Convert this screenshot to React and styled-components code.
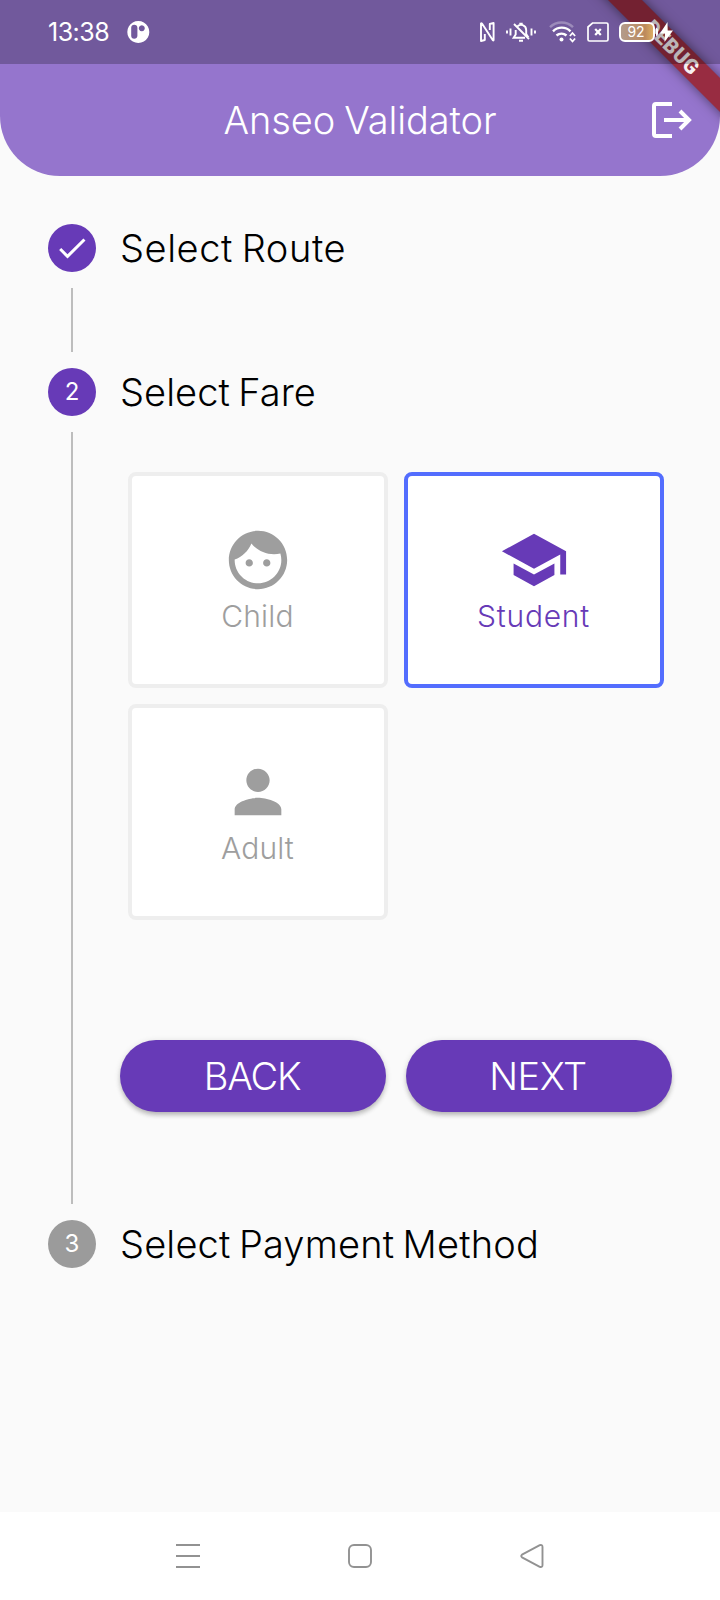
import React from "react";
import styled, { createGlobalStyle } from "styled-components";

const purple = "#673ab7";
const grey = "#9e9e9e";

const GlobalStyle = createGlobalStyle`
  *, *::before, *::after { box-sizing: border-box; }
  body { margin: 0; background: #fafafa; }
  button { font: inherit; border: 0; padding: 0; background: none; cursor: pointer; }
`;

const Screen = styled.div`
  position: relative;
  display: flex;
  flex-direction: column;
  width: 720px;
  height: 1600px;
  overflow: hidden;
  background: #fafafa;
  color: #000;
  font-family: Inter, "Liberation Sans", sans-serif;
  font-weight: 300;
`;

const Header = styled.header`
  display: flex;
  flex-direction: column;
  flex: none;
  height: 176px;
  border-radius: 0 0 60px 60px;
  background: #9575cd;
  color: #fff;
`;

const StatusBar = styled.div`
  position: relative;
  z-index: 3;
  display: flex;
  align-items: center;
  height: 64px;
  padding: 0 47px;
  background: rgba(0, 0, 0, 0.24);
`;

const Clock = styled.span`
  width: 79px;
  font-size: 25px;
  font-weight: 400;
  line-height: 30px;
  letter-spacing: -0.5px;
  padding-left: 1px;
`;

const StatusIcons = styled.div`
  display: flex;
  align-items: center;
  margin-left: auto;
`;

const StatusIcon = styled.svg`
  display: block;
  flex: none;
  overflow: visible;
  margin-right: ${(p) => p.$gap || 0}px;
`;

const Battery = styled.span`
  display: flex;
  align-items: center;
  justify-content: center;
  width: 36px;
  height: 20px;
  padding-right: 2px;
  border: 2px solid #fff;
  border-radius: 6px;
  background: linear-gradient(90deg, #b29b8c, #bd8a5c 75%, #dcae62);
  font-size: 14px;
  font-weight: 400;
  line-height: 16px;
`;

const BatteryTip = styled.span`
  width: 2px;
  height: 8px;
  margin: 0 2px 0 1px;
  border-radius: 0 2px 2px 0;
  background: #fff;
`;

const AppBar = styled.div`
  display: grid;
  grid-template-columns: 1fr auto 1fr;
  align-items: center;
  flex: 1;
  padding: 0 28px;
`;

const Title = styled.h1`
  grid-column: 2;
  margin: 0;
  font-size: 38px;
  font-weight: 300;
  line-height: 48px;
  letter-spacing: -0.1px;
  word-spacing: -1.5px;
`;

const LogoutButton = styled.button`
  justify-self: end;
  display: block;
  width: 40px;
  height: 36px;
`;

const RibbonCorner = styled.div`
  position: absolute;
  z-index: 2;
  top: 0;
  right: 0;
  width: 150px;
  height: 150px;
  overflow: hidden;
`;

const Ribbon = styled.div`
  position: absolute;
  top: 36px;
  left: 3px;
  width: 200px;
  height: 24px;
  padding-right: 2px;
  transform: rotate(45deg);
  background: #982c41;
  box-shadow: 0 0 12px rgba(0, 0, 0, 0.5);
  color: #f6f0f2;
  font-family: Roboto, sans-serif;
  font-size: 20.4px;
  font-weight: 900;
  line-height: 24px;
  letter-spacing: 0.4px;
  text-align: center;
`;

const Stepper = styled.main`
  display: flex;
  flex-direction: column;
  flex: 1;
  padding: 48px 48px 0;
`;

const StepHead = styled.div`
  display: flex;
  align-items: center;
  gap: 24px;
  height: 48px;
`;

const Badge = styled.span`
  display: flex;
  align-items: center;
  justify-content: center;
  flex: none;
  width: 48px;
  height: 48px;
  border-radius: 50%;
  background: ${(p) => (p.$inactive ? "#9b9b9b" : purple)};
  color: #fff;
  font-size: 24px;
  font-weight: 400;
  line-height: 28px;
`;

const StepTitle = styled.h2`
  margin: 0;
  font-size: 38px;
  font-weight: 300;
  line-height: 48px;
  letter-spacing: ${(p) => p.$track || 0}px;
  word-spacing: -2.5px;
`;

const StepBody = styled.div`
  display: flex;
  flex-direction: column;
  height: ${(p) => p.$height}px;
  margin: 16px 0 16px 23px;
  padding: 40px 0 0 47px;
  border-left: 2px solid #bdbdbd;
`;

const FareGrid = styled.div`
  display: grid;
  grid-template-columns: 260px 260px;
  grid-auto-rows: 216px;
  gap: 16px;
  padding-left: 8px;
`;

const FareCard = styled.button`
  && {
    display: flex;
    flex-direction: column;
    align-items: center;
    padding-top: 49px;
    border: 4px solid ${(p) => (p.$selected ? "#536dfe" : "#eeeeee")};
    border-radius: 8px;
    background: #fff;
    color: ${(p) => (p.$selected ? purple : grey)};
  }
`;

const FareIcon = styled.svg`
  display: block;
  width: 70px;
  height: 70px;
  fill: currentColor;
`;

const FareLabel = styled.span`
  font-size: 30px;
  line-height: 36px;
  margin: 3px 1px 0 0;
  letter-spacing: ${(p) => p.$track || 0}px;
`;

const Actions = styled.div`
  display: flex;
  gap: 20px;
  margin-top: 119.5px;
`;

const PillButton = styled.button`
  && {
    width: 266px;
    height: 72px;
    padding: 1px 2px 0 0;
    border-radius: 36px;
    background: ${purple};
    color: #fff;
    font-size: 38px;
    line-height: 48px;
    letter-spacing: ${(p) => p.$track || 0}px;
    box-shadow: 0 4px 5px -1px rgba(0, 0, 0, 0.22), 0 1px 6px rgba(0, 0, 0, 0.12);
  }
`;

const NavBar = styled.nav`
  display: flex;
  align-items: center;
  justify-content: space-between;
  flex: none;
  height: 88px;
  padding: 0 176px;
  background: #fff;
`;

const NavIcon = styled.svg`
  display: block;
  width: 24px;
  height: 24px;
  overflow: visible;
  fill: none;
  stroke: #929292;
  stroke-width: 1.9;
  stroke-linejoin: round;
  stroke-linecap: round;
`;

const fares = [
  {
    label: "Child",
    track: 0.2,
    path: "M10.25 13c0 .69-.56 1.25-1.25 1.25S7.75 13.69 7.75 13s.56-1.25 1.25-1.25 1.25.56 1.25 1.25zM15 11.75c-.69 0-1.25.56-1.25 1.25s.56 1.25 1.25 1.25 1.25-.56 1.25-1.25-.56-1.25-1.25-1.25zm7 .25c0 5.52-4.48 10-10 10S2 17.52 2 12 6.48 2 12 2s10 4.48 10 10zm-2 0c0-.78-.12-1.53-.33-2.24-.7.15-1.42.24-2.17.24-3.13 0-5.92-1.44-7.76-3.69C8.69 8.87 6.6 10.88 4 11.86c.01.04 0 .09 0 .14 0 4.41 3.59 8 8 8s8-3.59 8-8z",
  },
  {
    label: "Student",
    track: 0.75,
    selected: true,
    path: "M5 13.18v4L12 21l7-3.82v-4L12 17l-7-3.82zM12 3L1 9l11 6 9-4.91V17h2V9L12 3z",
  },
  {
    label: "Adult",
    track: 0.1,
    path: "M12 12c2.21 0 4-1.79 4-4s-1.79-4-4-4-4 1.79-4 4 1.79 4 4 4zm0 2c-2.67 0-8 1.34-8 4v2h16v-2c0-2.66-5.33-4-8-4z",
  },
];

function StatusRow() {
  return (
    <StatusBar>
      <Clock>13:38</Clock>
      <StatusIcon width="24" height="24" viewBox="0 0 24 24">
        <path
          fill="#fff"
          fillRule="evenodd"
          d="M12.3 1a11 11 0 1 0 .01 0zM8.2 4.8c2 0 3.2 1 3.2 3v8c0 2-1.4 3-3.2 3S5.2 17.8 5.2 15.8v-8c0-2 1.2-3 3-3zM15.8 5.2a3 3 0 1 1-.01 0z"
        />
      </StatusIcon>
      <StatusIcons>
        <StatusIcon $gap={11} width="15" height="20" viewBox="0 0 15 20" fill="none" stroke="#fff" strokeWidth="1.9" strokeLinejoin="round">
          <path d="M4.8 12V18L1 19V1.500Q1.500 1 2.300 2L12.700 18Q13.600 19 13.600 18V1L9.800 2V8" />
        </StatusIcon>
        <StatusIcon $gap={13} width="30" height="20" viewBox="0 0 30 20" fill="none" stroke="#fff" strokeWidth="1.9">
          <path d="M1 8.5v3M4.5 6.5v7M25.5 6.5v7M29 8.5v3" />
          <path d="M11 4.8A5.2 5.2 0 0 1 20.2 8v4l2.3 3.5M9.7 8v4.5L7.6 15.8H19M8 2l15 15M13.3 1.8h3.4M13 18.8h4" />
        </StatusIcon>
        <StatusIcon $gap={11} width="27" height="20" viewBox="0 0 27 20" fill="none" stroke="#fff" strokeWidth="2.4">
          <path stroke="rgba(255,255,255,.3)" d="M1 5.2a16.5 16.5 0 0 1 23 0" />
          <path d="M4 9.3a12.3 12.3 0 0 1 17.5 0M7.5 13.5a7.5 7.5 0 0 1 10 0" />
          <circle cx="12.5" cy="17.5" r="2" fill="#fff" stroke="none" />
          <path strokeWidth="1.8" d="M20.9 14l2.6-3 2.6 3M20.9 16.5l2.6 3 2.6-3" />
        </StatusIcon>
        <StatusIcon $gap={10.5} width="22" height="20" viewBox="0 0 22 20" fill="none" stroke="#fff">
          <path strokeWidth="1.7" d="M5.500 1H19.5Q21 1 21 2.5V17.5Q21 19 19.5 19H2.5Q1 19 1 17.5V5z" />
          <path strokeWidth="2.2" d="M8.2 7l5.6 6M13.8 7l-5.6 6" />
        </StatusIcon>
        <Battery>92</Battery>
        <BatteryTip />
        <StatusIcon width="13" height="20" viewBox="0 0 13 20">
          <path fill="#fff" d="M7.5 0L0 11.5h5L4.5 20 13 8.5H7.7z" />
        </StatusIcon>
      </StatusIcons>
    </StatusBar>
  );
}

function FareOption({ label, track, selected, path }) {
  return (
    <FareCard type="button" $selected={selected}>
      <FareIcon viewBox="0 0 24 24">
        <path d={path} />
      </FareIcon>
      <FareLabel $track={track}>{label}</FareLabel>
    </FareCard>
  );
}

export default function App() {
  return (
    <Screen>
      <GlobalStyle />
      <Header>
        <StatusRow />
        <AppBar>
          <Title>Anseo Validator</Title>
          <LogoutButton type="button" aria-label="Log out">
            <svg width="40" height="36" viewBox="0 0 40 36" fill="none" stroke="#fff" strokeWidth="4">
              <path d="M20 2H4Q2 2 2 4V32Q2 34 4 34H20M12 18H36M28 9L37 18L28 27" />
            </svg>
          </LogoutButton>
        </AppBar>
      </Header>
      <RibbonCorner>
        <Ribbon>DEBUG</Ribbon>
      </RibbonCorner>

      <Stepper>
        <StepHead>
          <Badge>
            <svg width="36" height="36" viewBox="0 0 24 24" fill="#fff">
              <path d="M9 16.17L4.83 12l-1.42 1.41L9 19 21 7l-1.41-1.41z" />
            </svg>
          </Badge>
          <StepTitle $track={0.57}>Select Route</StepTitle>
        </StepHead>
        <StepBody $height={64} />

        <StepHead>
          <Badge>2</Badge>
          <StepTitle $track={0.07}>Select Fare</StepTitle>
        </StepHead>
        <StepBody $height={772}>
          <FareGrid>
            {fares.map((fare) => (
              <FareOption key={fare.label} {...fare} />
            ))}
          </FareGrid>
          <Actions>
            <PillButton type="button" $track={-1.2}>BACK</PillButton>
            <PillButton type="button" $track={-0.4}>NEXT</PillButton>
          </Actions>
        </StepBody>

        <StepHead>
          <Badge $inactive>3</Badge>
          <StepTitle $track={0.17}>Select Payment Method</StepTitle>
        </StepHead>
      </Stepper>

      <NavBar>
        <NavIcon viewBox="0 0 24 24">
          <path strokeLinecap="butt" d="M0 1h24M0 12h24M0 23h24" />
        </NavIcon>
        <NavIcon viewBox="0 0 24 24">
          <rect x="1" y="1" width="22" height="22" rx="5" />
        </NavIcon>
        <NavIcon viewBox="0 0 24 24">
          <path d="M2 10.7L19.8 1.2Q22.5 .4 22.5 3V21Q22.5 23.6 19.8 22.8L2 13.3Q.5 12 2 10.7z" />
        </NavIcon>
      </NavBar>
    </Screen>
  );
}
